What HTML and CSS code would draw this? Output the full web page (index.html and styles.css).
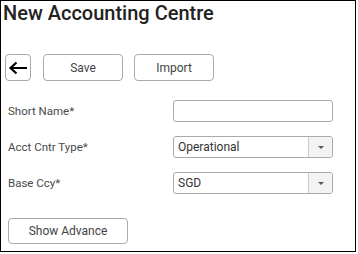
FILE: index.html
```html
<!DOCTYPE html>
<html lang="en">
<head>
  <meta charset="UTF-8" />
  <meta name="viewport" content="width=device-width, initial-scale=1.0" />
  <title>New Accounting Centre</title>
  <link rel="stylesheet" href="styles.css">
</head>
<body>
  <div class="frame">
    <h2 class="title">New Accounting Centre</h2>

    <div class="toolbar">
      <button class="btn back-btn" type="button">
        <svg width="20" height="14" viewBox="0 0 20 14">
          <path d="M19 7H3M8.5 1.5L2.5 7l6 5.5" fill="none" stroke="#000" stroke-width="2.2" />
        </svg>
      </button>
      <button class="btn wide-btn save-btn" type="button">Save</button>
      <button class="btn wide-btn" type="button">Import</button>
    </div>

    <div class="fields">
      <div class="row">
        <label for="shortName">Short Name*</label>
        <input type="text" id="shortName" class="field" />
      </div>
      <div class="row">
        <label>Acct Cntr Type*</label>
        <div class="field combo">
          <span class="combo-value">Operational</span>
          <span class="combo-arrow"></span>
        </div>
      </div>
      <div class="row">
        <label>Base Ccy*</label>
        <div class="field combo">
          <span class="combo-value">SGD</span>
          <span class="combo-arrow"></span>
        </div>
      </div>
    </div>

    <button class="btn advance-btn" type="button">Show Advance</button>
  </div>
</body>
</html>
```

FILE: styles.css
```css
body {
  margin: 0;
  padding: 0;
  background-color: #fff;
  font-family: Roboto, "Liberation Sans", sans-serif;
  color: #444;
}

.frame {
  width: 356px;
  height: 252px;
  box-sizing: border-box;
  border: 1.5px solid #000;
  padding: 0 0 0 4px;
}

.title {
  margin: 0 0 0 -2px;
  font-size: 20px;
  font-weight: 500;
  line-height: 25px;
  color: #222;
}

.toolbar {
  display: flex;
  margin-top: 28px;
}

.btn {
  height: 27px;
  padding: 0;
  border: 1px solid #aaa;
  border-radius: 4px;
  background-color: #fff;
  font-family: Roboto, "Liberation Sans", sans-serif;
  font-size: 12px;
  color: #444;
  cursor: pointer;
}

.back-btn {
  width: 26px;
  display: flex;
  align-items: center;
  justify-content: center;
}

.wide-btn {
  width: 80px;
}

.save-btn {
  margin: 0 11px 0 12px;
}

.fields {
  display: flex;
  flex-direction: column;
  gap: 14px;
  margin-top: 19px;
  padding-left: 3px;
}

.row {
  display: flex;
  align-items: center;
  height: 22px;
}

.row label {
  width: 165px;
  font-size: 11.5px;
  color: #4a4a4a;
}

.field {
  width: 160px;
  height: 22px;
  box-sizing: border-box;
  border: 1px solid #aaa;
  border-radius: 3px;
  background-color: #fff;
}

.combo {
  display: flex;
  overflow: hidden;
}

.combo-value {
  flex: 1;
  padding-left: 4px;
  font-size: 12px;
  line-height: 20px;
  color: #333;
}

.combo-arrow {
  width: 23px;
  border-left: 1px solid #ccc;
  background-color: #f3f3f3;
  display: flex;
  align-items: center;
  justify-content: center;
}

.combo-arrow::after {
  content: "";
  border-left: 3.5px solid transparent;
  border-right: 3.5px solid transparent;
  border-top: 3.5px solid #4e5a66;
}

.advance-btn {
  width: 120px;
  height: 26px;
  margin: 24px 0 0 3px;
}
```
